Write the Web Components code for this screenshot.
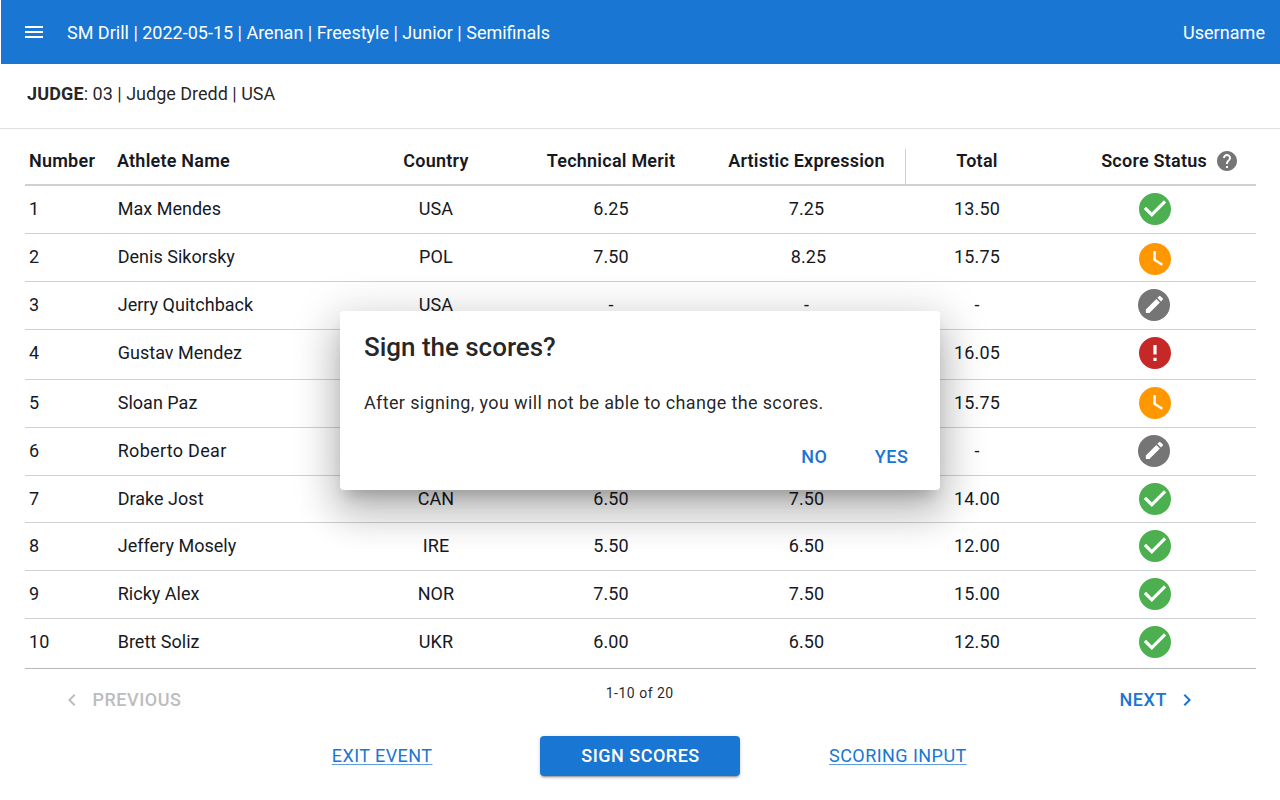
<!DOCTYPE html>
<html lang="en">
<head>
<meta charset="utf-8">
<title>SM Drill – Scores</title>
<style>
  html, body { margin: 0; height: 100%; }
  body {
    --primary: #1976d2;
    --ink: #16191f;
    --line: #cdd0d5;
    background: #fff;
    color: rgba(0, 0, 0, .87);
    font: 400 18px/24px Roboto, sans-serif;
    width: 1280px; height: 800px; overflow: hidden; position: relative;
  }
</style>
</head>
<body>
<app-bar>SM Drill | 2022-05-15 | Arenan | Freestyle | Junior | Semifinals<span slot="user">Username</span></app-bar>
<judge-info><b>JUDGE</b>: 03 | Judge Dredd | USA</judge-info>
<score-table>
  <score-row number="1" name="Max Mendes" country="USA" tech="6.25" art="7.25" total="13.50" status="done"></score-row>
  <score-row number="2" name="Denis Sikorsky" country="POL" tech="7.50" art="8.25" total="15.75" status="wait" style="--art-shift:5px;--icon-top:9px"></score-row>
  <score-row number="3" name="Jerry Quitchback" country="USA" tech="-" art="-" total="-" status="edit"></score-row>
  <score-row number="4" name="Gustav Mendez" total="16.05" status="error" style="--row:50px"></score-row>
  <score-row number="5" name="Sloan Paz" total="15.75" status="wait"></score-row>
  <score-row number="6" name="Roberto Dear" total="-" status="edit" style="--name-spacing:.3px"></score-row>
  <score-row number="7" name="Drake Jost" country="CAN" tech="6.50" art="7.50" total="14.00" status="done" style="--row:47px"></score-row>
  <score-row number="8" name="Jeffery Mosely" country="IRE" tech="5.50" art="6.50" total="12.00" status="done"></score-row>
  <score-row number="9" name="Ricky Alex" country="NOR" tech="7.50" art="7.50" total="15.00" status="done"></score-row>
  <score-row number="10" name="Brett Soliz" country="UKR" tech="6.00" art="6.50" total="12.50" status="done" style="--row:50px;--line:#b5b7b8"></score-row>
</score-table>
<table-pager>1-10 of 20</table-pager>
<event-actions></event-actions>
<confirm-dialog>
  <span slot="title">Sign the scores?</span>
  After signing, you will not be able to change the scores.
</confirm-dialog>

<script>
const ICONS = {
  menu: 'M3 18h18v-2H3v2zm0-5h18v-2H3v2zm0-7v2h18V6H3z',
  left: 'M15.41 7.41 14 6l-6 6 6 6 1.41-1.41L10.83 12z',
  right: 'M10 6 8.59 7.41 13.17 12l-4.58 4.59L10 18l6-6z',
  help: 'M12 2C6.48 2 2 6.48 2 12s4.48 10 10 10 10-4.48 10-10S17.52 2 12 2zm1 17h-2v-2h2v2zm2.07-7.75l-.9.92C13.45 12.9 13 13.5 13 15h-2v-.5c0-1.1.45-2.1 1.17-2.83l1.24-1.26c.37-.36.59-.86.59-1.41 0-1.1-.9-2-2-2s-2 .9-2 2H8c0-2.21 1.79-4 4-4s4 1.79 4 4c0 .88-.36 1.68-.93 2.25z',
  done: 'M12 2C6.48 2 2 6.48 2 12s4.48 10 10 10 10-4.48 10-10S17.52 2 12 2zm-2 15l-5-5 1.41-1.41L10 14.17l7.59-7.59L19 8l-9 9z',
  wait: 'M12 2C6.5 2 2 6.5 2 12s4.5 10 10 10 10-4.5 10-10S17.5 2 12 2zm4.2 14.2L11 13V7h1.5v5.2l4.5 2.7-.8 1.3z',
  error: 'M12 2C6.48 2 2 6.48 2 12s4.48 10 10 10 10-4.48 10-10S17.52 2 12 2zm1 15h-2v-2h2v2zm0-4h-2V7h2v6z',
  edit: 'M3 17.25V21h3.75L17.81 9.94l-3.75-3.75L3 17.25zM20.71 7.04a.9959.9959 0 0 0 0-1.41l-2.34-2.34a.9959.9959 0 0 0-1.41 0l-1.83 1.83 3.75 3.75 1.83-1.83z'
};
const COLUMNS = '88px 244px 158px 192px 198px 1px 142px 1fr';

class ViewElement extends HTMLElement {
  connectedCallback() {
    this.attachShadow({ mode: 'open' }).innerHTML = `<style>${this.css()}</style>${this.html()}`;
  }
}

customElements.define('ui-icon', class extends ViewElement {
  css() { return ':host{display:block} svg{display:block;width:100%;height:100%;fill:currentColor}'; }
  html() { return `<svg viewBox="0 0 24 24"><path d="${ICONS[this.getAttribute('name')]}"/></svg>`; }
});

customElements.define('status-icon', class extends ViewElement {
  css() {
    return `:host{display:block;width:32px;height:32px} svg{display:block}
      .done{fill:#4caf50} .wait{fill:#ff9800} .error{fill:#c62828}
      .edit circle{fill:#757575} .edit path{fill:#fff}`;
  }
  html() {
    const type = this.getAttribute('type');
    if (type === 'edit') return `<svg class="edit" width="32" height="32" viewBox="0 0 32 32"><circle cx="16" cy="16" r="16"/><path transform="translate(5 4) scale(.95)" d="${ICONS.edit}"/></svg>`;
    return `<svg class="${type}" width="32" height="32" viewBox="2 2 20 20"><path d="${ICONS[type]}"/></svg>`;
  }
});

customElements.define('app-bar', class extends ViewElement {
  css() {
    return `:host{display:flex;align-items:center;height:64px;box-sizing:border-box;margin-left:1px;padding:1px 15px 0 21px;
      background:var(--primary);color:#fff}
      ui-icon{width:24px;height:24px;margin:-1px 21px 0 0}
      .title{flex:1}
      .user{letter-spacing:.05px}`;
  }
  html() { return '<ui-icon name="menu"></ui-icon><div class="title"><slot></slot></div><div class="user"><slot name="user"></slot></div>'; }
});

customElements.define('judge-info', class extends ViewElement {
  css() { return ':host{display:block;height:65px;box-sizing:border-box;padding:18px 27px 0;border-bottom:1px solid #e0e0e0} ::slotted(b){font-weight:700;letter-spacing:.15px}'; }
  html() { return '<slot></slot>'; }
});

customElements.define('score-table', class extends ViewElement {
  css() {
    return `:host{display:block;margin:0 24px 0 25px;color:var(--ink)}
      header{display:grid;grid-template-columns:${COLUMNS};height:57px;box-sizing:border-box;padding-top:20px;
        border-bottom:2px solid var(--line);font-weight:600;letter-spacing:.23px;text-align:center;white-space:nowrap}
      .num,.name{text-align:left;padding-left:4px}
      .art{padding-left:1px}
      i{background:var(--line)}
      .status{display:flex;justify-content:flex-end;align-items:center;gap:10px;height:24px;padding-right:19px}
      ui-icon{width:24px;height:24px;color:#757575;margin:0 -2px}`;
  }
  html() {
    return `<header><div class="num">Number</div><div class="name">Athlete Name</div><div>Country</div><div>Technical Merit</div>
      <div class="art">Artistic Expression</div><i></i><div>Total</div><div class="status">Score Status<ui-icon name="help"></ui-icon></div></header><slot></slot>`;
  }
});

customElements.define('score-row', class extends ViewElement {
  css() {
    return `:host{display:grid;grid-template-columns:${COLUMNS};height:var(--row,48px);box-sizing:border-box;
      border-bottom:1px solid var(--line);line-height:46px;letter-spacing:.12px;text-align:center;white-space:nowrap}
      .num,.name{text-align:left;padding-left:4px}
      .name{padding-left:4.7px;letter-spacing:var(--name-spacing,.02px)}
      .art{padding-left:var(--art-shift,1px)}
      .status{display:flex;justify-content:center;align-items:flex-start;padding:var(--icon-top,7px) 0 0 6px}
      :host([status=edit]) .status{padding-left:4px}`;
  }
  html() {
    const a = n => this.getAttribute(n) || '';
    return `<div class="num">${a('number')}</div><div class="name">${a('name')}</div><div>${a('country')}</div><div>${a('tech')}</div>
      <div class="art">${a('art')}</div><i></i><div>${a('total')}</div><div class="status"><status-icon type="${a('status')}"></status-icon></div>`;
  }
});

customElements.define('table-pager', class extends ViewElement {
  css() {
    return `:host{display:grid;grid-template-columns:1fr auto 1fr;align-items:center;height:67px;box-sizing:border-box;padding:0 81.5px 5px 60px}
      div{display:flex;align-items:center;font-weight:500;letter-spacing:.55px}
      .prev{color:#bdbdbd;gap:8.4px}
      .next{color:var(--primary);justify-content:flex-end;gap:7.6px}
      .count{font-weight:400;font-size:14px;letter-spacing:.5px;margin:0 0 14px 21px}
      ui-icon{width:24px;height:24px}`;
  }
  html() {
    return `<div class="prev"><ui-icon name="left"></ui-icon>PREVIOUS</div><div class="count"><slot></slot></div>
      <div class="next">NEXT<ui-icon name="right"></ui-icon></div>`;
  }
});

customElements.define('event-actions', class extends ViewElement {
  css() {
    return `:host{display:grid;grid-template-columns:540px 200px 1fr;align-items:center;letter-spacing:.45px}
      a{color:var(--primary);text-decoration:underline;text-decoration-color:rgba(25,118,210,.7);text-decoration-thickness:1px;text-underline-offset:2px}
      .exit{justify-self:end;margin-right:107.5px}
      .input{justify-self:start;margin-left:89px}
      button{font:500 18px/24px Roboto,sans-serif;letter-spacing:.5px;color:#fff;background:var(--primary);border:0;border-radius:4px;height:40px;padding:0 0 0 1px;
        box-shadow:0 3px 1px -2px rgba(0,0,0,.2),0 2px 2px rgba(0,0,0,.14),0 1px 5px rgba(0,0,0,.12)}`;
  }
  html() { return '<a class="exit">EXIT EVENT</a><button>SIGN SCORES</button><a class="input">SCORING INPUT</a>'; }
});

customElements.define('confirm-dialog', class extends ViewElement {
  css() {
    return `:host{position:absolute;left:340px;top:311px;width:600px;height:179px;box-sizing:border-box;padding:20px 24px 0;
      background:#fff;border-radius:4px;color:rgba(0,0,0,.87);
      box-shadow:0 11px 15px -7px rgba(0,0,0,.22),0 24px 38px 3px rgba(0,0,0,.16),0 9px 46px 8px rgba(0,0,0,.14)}
      h2{margin:0 0 24px;font-size:26px;line-height:32px;font-weight:500;letter-spacing:-.03px}
      p{margin:0 0 29px;line-height:32px;letter-spacing:.36px}
      footer{display:flex;justify-content:flex-end;gap:47.5px;padding-right:7.7px;color:var(--primary);font-weight:500;letter-spacing:.46px;line-height:18px}`;
  }
  html() { return '<h2><slot name="title"></slot></h2><p><slot></slot></p><footer><span>NO</span><span>YES</span></footer>'; }
});
</script>
</body>
</html>
